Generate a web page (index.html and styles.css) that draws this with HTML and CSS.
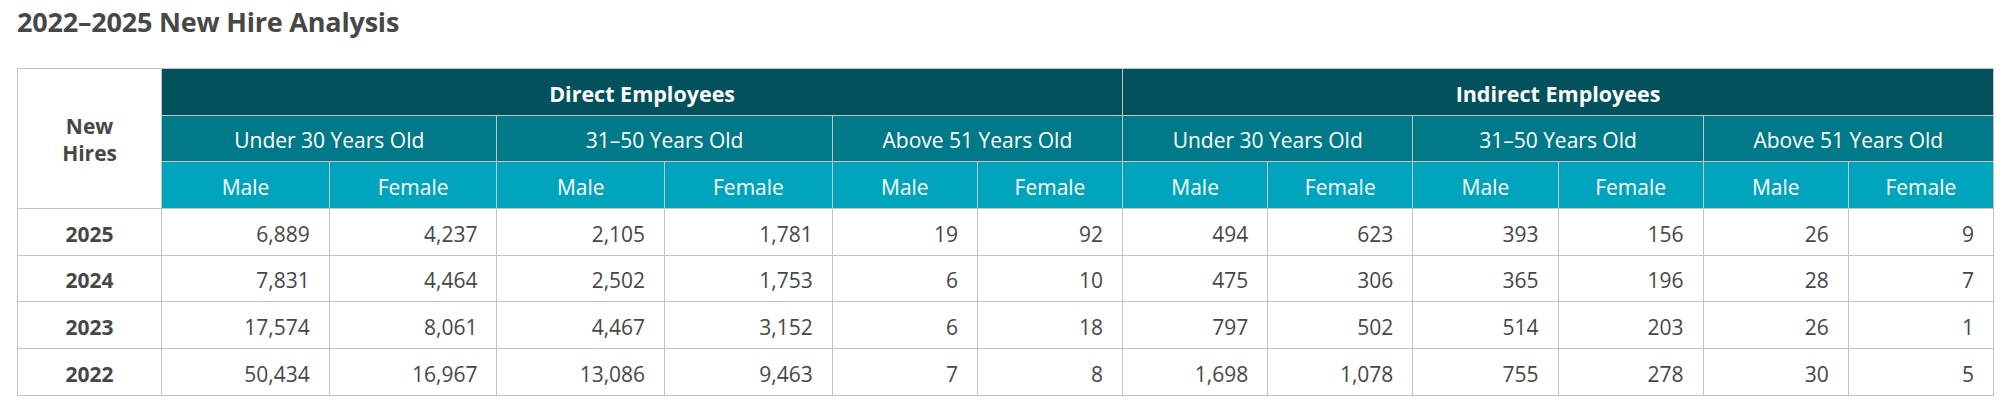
FILE: index.html
```html
<!DOCTYPE html>
<html lang="en">
<head>
<meta charset="utf-8">
<title>2022–2025 New Hire Analysis</title>
<link rel="stylesheet" href="styles.css">
</head>
<body>
<div class="page">
  <h1 class="title">2022–2025 New Hire Analysis</h1>
  <table class="hires">
    <colgroup>
      <col class="c-year">
      <col class="c-wide"><col class="c-wide"><col class="c-wide"><col class="c-wide">
      <col class="c-n"><col class="c-n">
      <col class="c-n"><col class="c-n"><col class="c-n"><col class="c-n"><col class="c-n"><col class="c-n">
    </colgroup>
    <thead>
      <tr class="h1">
        <th class="corner" rowspan="3">New<br>Hires</th>
        <th colspan="6">Direct Employees</th>
        <th colspan="6">Indirect Employees</th>
      </tr>
      <tr class="h2">
        <th colspan="2">Under 30 Years Old</th>
        <th colspan="2">31–50 Years Old</th>
        <th colspan="2">Above 51 Years Old</th>
        <th colspan="2">Under 30 Years Old</th>
        <th colspan="2">31–50 Years Old</th>
        <th colspan="2">Above 51 Years Old</th>
      </tr>
      <tr class="h3">
        <th>Male</th><th>Female</th>
        <th>Male</th><th>Female</th>
        <th>Male</th><th>Female</th>
        <th>Male</th><th>Female</th>
        <th>Male</th><th>Female</th>
        <th>Male</th><th>Female</th>
      </tr>
    </thead>
    <tbody>
      <tr>
        <th class="year">2025</th>
        <td>6,889</td><td>4,237</td><td>2,105</td><td>1,781</td><td>19</td><td>92</td>
        <td>494</td><td>623</td><td>393</td><td>156</td><td>26</td><td>9</td>
      </tr>
      <tr>
        <th class="year">2024</th>
        <td>7,831</td><td>4,464</td><td>2,502</td><td>1,753</td><td>6</td><td>10</td>
        <td>475</td><td>306</td><td>365</td><td>196</td><td>28</td><td>7</td>
      </tr>
      <tr>
        <th class="year">2023</th>
        <td>17,574</td><td>8,061</td><td>4,467</td><td>3,152</td><td>6</td><td>18</td>
        <td>797</td><td>502</td><td>514</td><td>203</td><td>26</td><td>1</td>
      </tr>
      <tr>
        <th class="year">2022</th>
        <td>50,434</td><td>16,967</td><td>13,086</td><td>9,463</td><td>7</td><td>8</td>
        <td>1,698</td><td>1,078</td><td>755</td><td>278</td><td>30</td><td>5</td>
      </tr>
    </tbody>
  </table>
</div>
</body>
</html>
```
FILE: styles.css
```css
* { box-sizing: border-box; }

html, body {
  margin: 0;
  padding: 0;
  background: #ffffff;
}

body {
  font-family: "Open Sans", "Noto Sans", "Liberation Sans", sans-serif;
  color: #474747;
}

.page {
  padding: 0 0 0 17px;
}

.title {
  margin: 0;
  padding-top: 4px;
  height: 68px;
  font-size: 27px;
  font-weight: 700;
  line-height: 36px;
  color: #474747;
  letter-spacing: -0.2px;
}

.hires {
  border-collapse: collapse;
  table-layout: fixed;
  width: 1977px;
  font-size: 21px;
}

.c-year { width: 144px; }
.c-wide { width: 167.5px; }
.c-n { width: 145px; }

.hires th,
.hires td {
  border: 1px solid #c3c3c3;
  padding: 4px 0 0 0;
  height: 46.67px;
  line-height: 26px;
  vertical-align: middle;
  white-space: nowrap;
}

.hires thead th {
  color: #ffffff;
  font-weight: 400;
  text-align: center;
}

.hires .h1 th {
  background: #02515d;
  font-weight: 700;
  font-size: 21.5px;
}

.hires .h2 th {
  background: #007a88;
}

.hires .h3 th {
  background: #00a5bd;
}

.hires thead th.corner {
  background: #ffffff;
  color: #474747;
  font-weight: 700;
  font-size: 21px;
  line-height: 27.7px;
}

.hires th.year {
  font-weight: 700;
  text-align: center;
  color: #474747;
}

.hires td {
  text-align: right;
  padding-right: 19px;
  color: #474747;
}
```
